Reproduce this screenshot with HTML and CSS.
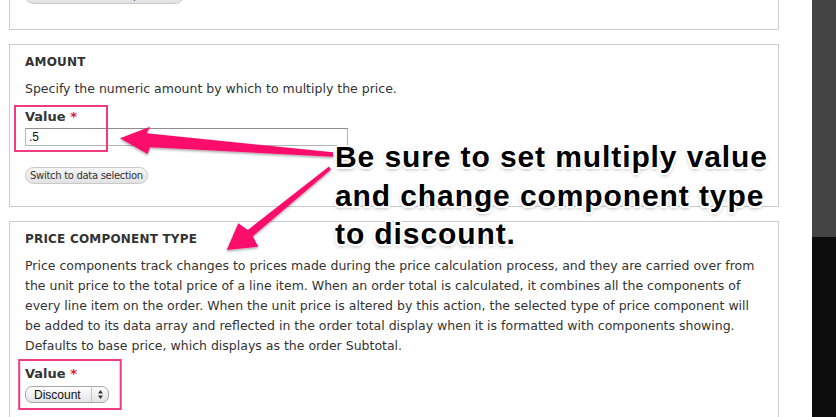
FILE: index.html
```html
<!DOCTYPE html>
<html>
<head>
<meta charset="utf-8">
<link rel="stylesheet" href="styles.css">
</head>
<body>
<div class="page">
  <main class="content">
    <div class="box box-cut">
      <button class="btn">Switch to the direct input mode</button>
    </div>
    <div class="box box-amount">
      <h3 class="box-title">AMOUNT</h3>
      <p class="desc">Specify the numeric amount by which to multiply the price.</p>
      <div class="field">
        <label class="label">Value <span class="req">*</span></label>
        <div class="input">.5</div>
      </div>
      <button class="btn">Switch to data selection</button>
    </div>
    <div class="box box-type">
      <h3 class="box-title">PRICE COMPONENT TYPE</h3>
      <p class="desc">Price components track changes to prices made during the price calculation process, and they are carried over from<br>the unit price to the total price of a line item. When an order total is calculated, it combines all the components of<br>every line item on the order. When the unit price is altered by this action, the selected type of price component will<br>be added to its data array and reflected in the order total display when it is formatted with components showing.<br>Defaults to base price, which displays as the order Subtotal.</p>
      <div class="field">
        <label class="label">Value <span class="req">*</span></label>
        <div class="select"><span class="select-text">Discount</span><span class="select-arrows"><svg width="7" height="11" viewBox="0 0 7 11"><path d="M3.5 1 L6 4.5 H1 Z M3.5 10 L6 6.5 H1 Z" fill="#333"/></svg></span></div>
      </div>
    </div>
  </main>
  <aside class="sidebar">
    <div class="sb-top"></div>
    <div class="sb-bottom"></div>
  </aside>

  <svg class="marks" width="836" height="417" viewBox="0 0 836 417">
    <defs>
      <filter id="sh" x="-10%" y="-10%" width="120%" height="130%">
        <feDropShadow dx="0" dy="1.5" stdDeviation="1.2" flood-color="#000" flood-opacity="0.35"/>
      </filter>
    </defs>
    <rect x="15" y="106" width="92" height="45" fill="none" stroke="#ee3b82" stroke-width="2"/>
    <rect x="19.2" y="360" width="101.5" height="49" fill="none" stroke="#ee3b82" stroke-width="2"/>
    <g fill="#fb0f6c" filter="url(#sh)">
      <polygon points="120,138.3 150,126.7 146.7,133.3 333,152.3 333,156.7 150,147.3 147.5,154"/>
      <polygon points="226.7,250 238.3,223.3 247.8,230 329,166.6 331,169.4 252.8,236.2 258.3,246.7"/>
    </g>
  </svg>
  <div class="callout">Be sure to set multiply value<br>and change component type<br>to discount.</div>
</div>
</body>
</html>
```
FILE: styles.css
```css
html, body {
  margin: 0;
  padding: 0;
  background: #fff;
}
.page {
  position: relative;
  width: 836px;
  height: 417px;
  overflow: hidden;
  display: flex;
  font-family: "DejaVu Sans", sans-serif;
  color: #333;
}
.content {
  width: 812px;
  padding: 0 9px;
  box-sizing: border-box;
  margin-top: -23px;
  display: flex;
  flex-direction: column;
  gap: 14px;
}
.box {
  width: 770px;
  box-sizing: border-box;
  border: 1px solid #cccccc;
  padding: 9px 15px 22px;
}
.box-cut {
  padding: 9px 15px 25px;
}
.box-type {
  flex: 1;
}
.box-title {
  margin: 0;
  font-size: 12px;
  line-height: 16px;
  font-weight: bold;
  letter-spacing: 0.2px;
}
.desc {
  margin: 9px 0 0;
  font-size: 12.5px;
  line-height: 20px;
  white-space: nowrap;
}
.field {
  margin-top: 9px;
  display: flex;
  flex-direction: column;
  align-items: flex-start;
}
.label {
  font-size: 13px;
  font-weight: bold;
  line-height: 18px;
}
.req {
  color: #e0163a;
}
.input {
  margin-top: 2px;
  width: 323px;
  height: 18px;
  box-sizing: border-box;
  border: 1px solid #b4b4b4;
  border-top-color: #8e8e8e;
  font-family: "Liberation Sans", Arial, sans-serif;
  font-size: 12px;
  line-height: 16px;
  padding: 0 3px;
  color: #111;
}
.btn {
  display: block;
  margin-top: 21px;
  height: 17px;
  padding: 0 4px;
  border: 1px solid #c9c9c9;
  border-radius: 9px;
  background: linear-gradient(#f6f6f6, #e2e2e2);
  font-family: "DejaVu Sans", sans-serif;
  font-size: 10px;
  letter-spacing: -0.3px;
  line-height: 15px;
  color: #333;
}
.box-cut .btn {
  margin-top: 0;
}
.select {
  margin-top: 3px;
  width: 84px;
  height: 17px;
  box-sizing: border-box;
  border: 1px solid #a8a8a8;
  border-radius: 7px;
  background: linear-gradient(#fdfdfd, #e4e4e4);
  display: flex;
  align-items: center;
  font-family: "Liberation Sans", Arial, sans-serif;
  font-size: 12px;
  color: #111;
}
.select-text {
  flex: 1;
  padding-left: 8px;
}
.select-arrows {
  width: 16px;
  height: 15px;
  border-left: 1px solid #c4c4c4;
  display: flex;
  align-items: center;
  justify-content: center;
}
.sidebar {
  width: 24px;
  display: flex;
  flex-direction: column;
}
.sb-top {
  height: 237px;
  background: #444;
}
.sb-bottom {
  flex: 1;
  background: #0c0c0c;
}
.marks {
  position: absolute;
  left: 0;
  top: 0;
  pointer-events: none;
}
.callout {
  position: absolute;
  left: 335px;
  top: 138px;
  font-family: "Liberation Sans", Arial, sans-serif;
  font-weight: bold;
  font-size: 30px;
  line-height: 38.5px;
  color: #000;
  letter-spacing: 0.9px;
  text-shadow:
    -1.5px -1.5px 0 #fff, 1.5px -1.5px 0 #fff, -1.5px 1.5px 0 #fff, 1.5px 1.5px 0 #fff,
    0 -2px 0 #fff, 0 2px 0 #fff, -2px 0 0 #fff, 2px 0 0 #fff,
    0 2px 4px rgba(0,0,0,0.45);
  white-space: nowrap;
}
```
